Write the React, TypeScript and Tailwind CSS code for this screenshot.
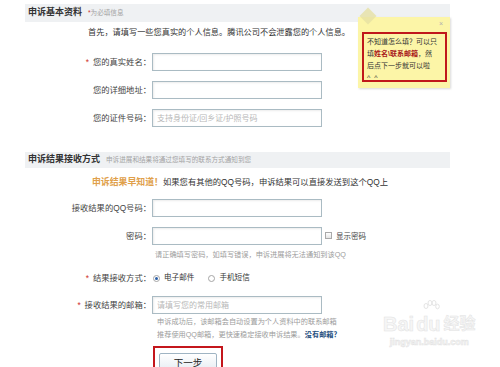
import { ReactNode } from "react";

const font = "font-['Liberation_Sans','Noto_Sans_CJK_SC',sans-serif]";

type RowProps = {
  label: ReactNode;
  req?: boolean;
  children: ReactNode;
  height?: string;
};

const Row = ({ label, req, children, height = "h-[18px]" }: RowProps) => (
  <div className={`flex items-center ${height}`}>
    <div className="w-[151px] shrink-0 text-right text-[8.3px] leading-[10px] text-[#444] whitespace-nowrap">
      {req && <span className="mr-[4px] text-[#d0332d]">*</span>}
      {label}
    </div>
    <div className="ml-[1px] flex items-center">{children}</div>
  </div>
);

const TextBox = ({ placeholder }: { placeholder?: string }) => (
  <input
    readOnly
    placeholder={placeholder}
    className="w-[170px] h-[18px] border border-[#aabbc3] bg-white px-[4px] text-[8px] outline-none shadow-[inset_1px_1px_2px_rgba(0,0,0,0.08)] placeholder:text-[#b8b8b8]"
  />
);

const Radio = ({ checked }: { checked?: boolean }) => (
  <span className="flex h-[7px] w-[7px] items-center justify-center rounded-full border border-[#a5a5a5] bg-white">
    {checked && <span className="h-[3px] w-[3px] rounded-full bg-[#2b5fa8]" />}
  </span>
);

const SectionBar = ({ title, note }: { title: string; note: ReactNode }) => (
  <div className="ml-[25px] flex w-[425px] items-center gap-[6px] bg-[#eff1f3] pl-[3px]">
    <span className="text-[9px] font-bold text-[#333] whitespace-nowrap">{title}</span>
    <span className="text-[6.6px] text-[#a3a3a3] whitespace-nowrap">{note}</span>
  </div>
);

const StickyNote = () => (
  <>
    <div className="absolute left-[358px] top-[17px] h-[71px] w-[92px] bg-[#fcf5a7] shadow-[1px_1px_2px_rgba(0,0,0,0.15)]">
      <span className="absolute right-[7px] top-[3px] text-[7px] leading-[8px] text-[#b0b0b0]">×</span>
      <div className="absolute left-[4px] top-[15px] h-[50px] w-[85px] overflow-hidden border-2 border-[#c0181b] pl-[3px] pt-[2px] text-[7px] leading-[12px] text-[#333]">
        <div className="whitespace-nowrap">不知道怎么填？可以只</div>
        <div className="whitespace-nowrap">
          填<span className="font-bold text-[#a8161a]">姓名\联系邮箱</span>，然
        </div>
        <div className="whitespace-nowrap">后点下一步就可以啦</div>
        <div className="whitespace-nowrap">^_^</div>
      </div>
    </div>
    <div className="absolute left-[362px] top-[10px] h-[12px] w-[12px] rotate-45 bg-[#e6e1a4]/80" />
  </>
);

const Watermark = () => (
  <div className="absolute left-[383px] top-[300px] flex flex-col items-center text-[#f6f6f6] [-webkit-text-stroke:0.5px_#e3e3e3]">
    <svg width="18" height="14" viewBox="0 0 18 14" className="ml-[4px]">
      <g fill="none" stroke="#e4e4e4" strokeWidth="1">
        <ellipse cx="4" cy="6" rx="2" ry="2.5" />
        <ellipse cx="8" cy="3" rx="2" ry="2.5" />
        <ellipse cx="12" cy="3" rx="2" ry="2.5" />
        <ellipse cx="15.5" cy="6.5" rx="1.8" ry="2.3" />
      </g>
    </svg>
    <div className="flex items-end text-[20px] font-bold leading-[20px]">
      <span>Bai</span>
      <span className="ml-[2px]">du</span>
      <span className="ml-[3px] text-[16px]">经验</span>
    </div>
    <div className="mt-[3px] text-[9px] font-bold leading-[10px]">jingyan.baidu.com</div>
  </div>
);

export default function App() {
  return (
    <div className={`relative h-[367px] w-[500px] overflow-hidden bg-white ${font}`}>
      <div className="flex flex-col pt-[4px]">
        <div className="h-[18px] flex">
          <SectionBar
            title="申诉基本资料"
            note={
              <>
                <span className="text-[#d0332d]">*</span>为必填信息
              </>
            }
          />
        </div>

        <p className="ml-[88px] mt-[6px] h-[10px] text-[8.2px] leading-[10px] text-[#333] whitespace-nowrap">
          首先，请填写一些您真实的个人信息。腾讯公司不会泄露您的个人信息。
        </p>

        <div className="mt-[15px] flex flex-col gap-[10px]">
          <Row label="您的真实姓名：" req>
            <TextBox />
          </Row>
          <Row label="您的详细地址：">
            <TextBox />
          </Row>
          <Row label="您的证件号码：">
            <TextBox placeholder="支持身份证/回乡证/护照号码" />
          </Row>
        </div>

        <div className="mt-[25px] h-[16px] flex">
          <SectionBar title="申诉结果接收方式" note="申诉进展和结果将通过您填写的联系方式通知到您" />
        </div>

        <p className="ml-[92px] mt-[7px] h-[10px] leading-[10px] whitespace-nowrap">
          <span className="text-[8.9px] font-bold text-[#e0a04a]">申诉结果早知道！</span>
          <span className="text-[8.3px] text-[#333]">如果您有其他的QQ号码，申诉结果可以直接发送到这个QQ上</span>
        </p>

        <div className="mt-[14px] flex flex-col gap-[10px]">
          <Row label="接收结果的QQ号码：">
            <TextBox />
          </Row>
          <Row label="密码：">
            <TextBox />
            <span className="ml-[3px] -mt-[2px] h-[7px] w-[7px] border border-[#a9a9a9] bg-linear-to-b from-white to-[#e4e4e4]" />
            <span className="ml-[4px] mt-[2px] text-[7.5px] leading-[10px] text-[#444] whitespace-nowrap">显示密码</span>
          </Row>
        </div>

        <p className="ml-[155px] mt-[5px] h-[10px] text-[7.2px] leading-[10px] text-[#9c9c9c] whitespace-nowrap">
          请正确填写密码，如填写错误，申诉进展将无法通知到该QQ
        </p>

        <div className="mt-[13px]">
          <Row label="结果接收方式：" req height="h-[10px]">
            <span className="ml-[1px]">
              <Radio checked />
            </span>
            <span className="ml-[4px] text-[7.6px] leading-[10px] text-[#333]">电子邮件</span>
            <span className="ml-[14px]">
              <Radio />
            </span>
            <span className="ml-[4px] text-[7.6px] leading-[10px] text-[#333]">手机短信</span>
          </Row>
        </div>

        <div className="mt-[13px]">
          <Row label="接收结果的邮箱：" req>
            <TextBox placeholder="请填写您的常用邮箱" />
          </Row>
        </div>

        <div className="ml-[157px] mt-[1px] text-[7.2px] leading-[13px] text-[#9c9c9c] whitespace-nowrap">
          <div>申诉成功后，该邮箱会自动设置为个人资料中的联系邮箱</div>
          <div>
            推荐使用QQ邮箱，更快速稳定接收申诉结果。
            <span className="font-bold text-[#1f4f80]">没有邮箱？</span>
          </div>
        </div>

        <div className="ml-[153px] mt-[5px] h-[30px] w-[70px] border-2 border-[#c4161c] pl-[4px] pt-[5px]">
          <button className="flex h-[20px] w-[58px] items-center justify-center rounded-[2px] border border-[#9fb4c3] bg-linear-to-b from-white to-[#e4ebf1] text-[9.5px] text-[#222]">
            下一步
          </button>
        </div>
      </div>

      <StickyNote />
      <Watermark />
    </div>
  );
}
